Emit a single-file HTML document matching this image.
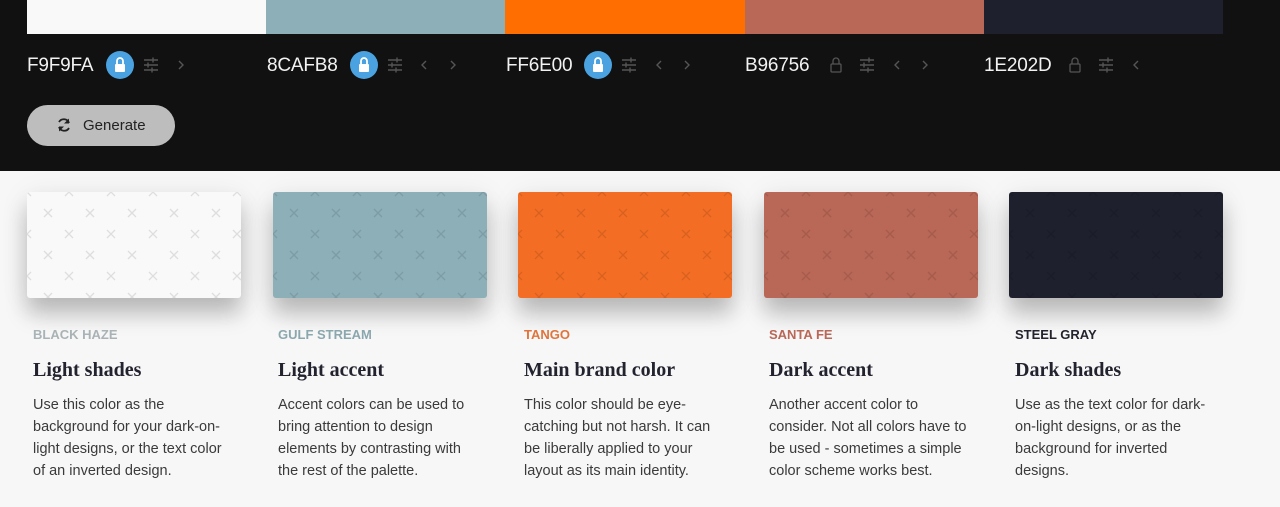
<!DOCTYPE html>
<html><head><meta charset="utf-8"><style>
*{margin:0;padding:0;box-sizing:border-box}
body{width:1280px;height:507px;overflow:hidden;background:#f7f7f7;font-family:"Liberation Sans",sans-serif;position:relative}
.top{position:absolute;left:0;top:0;width:1280px;height:171px;background:#111}
.bar{position:absolute;top:0;height:34px;width:239px}
.hex{position:absolute;top:55px;color:#f2f2f2;font-size:19px;letter-spacing:-0.2px}
.gen{position:absolute;left:27px;top:105px;width:148px;height:41px;border-radius:21px;background:#bdbdbd;color:#222;font-size:15px}
.gen span{position:absolute;left:56px;top:12px}
.card{position:absolute;top:192px;width:214px;height:106px;border-radius:3px;box-shadow:0 16px 22px rgba(0,0,0,.22),0 4px 30px rgba(0,0,0,.08);overflow:hidden}
.lab{position:absolute;top:327px;font-size:13px;font-weight:bold}
.tt{position:absolute;top:359px;font-family:"Liberation Serif",serif;font-weight:bold;font-size:20px;color:#22232e}
.ds{position:absolute;top:394px;width:200px;font-size:14.5px;line-height:22px;color:#3a3a3a;font-weight:300}
#px g{stroke:rgba(0,0,0,.11)}
</style></head><body>
<div class="top">
<div class="bar" style="left:27px;background:#f9f9fa"></div>
<div class="bar" style="left:266px;background:#8cafb8"></div>
<div class="bar" style="left:505px;background:#ff6e00;width:240px"></div>
<div class="bar" style="left:745px;background:#b96756"></div>
<div class="bar" style="left:984px;background:#1e202d"></div>

<div class="hex" style="left:27px">F9F9FA</div>
<div class="hex" style="left:267px">8CAFB8</div>
<div class="hex" style="left:506px">FF6E00</div>
<div class="hex" style="left:745px">B96756</div>
<div class="hex" style="left:984px">1E202D</div>
<svg width="1280" height="171" style="position:absolute;left:0;top:0">
<defs>
<g id="lk"><circle r="14" fill="#4aa3e0"/><rect x="-5" y="-1" width="10" height="8" rx="1" fill="#fff"/><path d="M-3 -1v-3a3 3 0 0 1 6 0v3" stroke="#fff" stroke-width="1.8" fill="none"/></g>
<g id="lo"><rect x="-5" y="-1" width="10" height="8" rx="1" fill="none" stroke="#555" stroke-width="1.3"/><path d="M-3 -1v-3a3 3 0 0 1 6 0v3" stroke="#555" stroke-width="1.3" fill="none"/></g>
<g id="sl" stroke="#555" stroke-width="1.4"><path d="M-7 -4h14M-7 1h14M-7 6h14"/><path d="M2 -6.5v5M-3 -1.5v5M1 3.5v5"/></g>
<path id="cr" d="M-2 -4l4 4l-4 4" stroke="#555" stroke-width="1.4" fill="none"/>
<path id="cl" d="M2 -4l-4 4l4 4" stroke="#555" stroke-width="1.4" fill="none"/>
</defs>
<use href="#lk" x="120" y="65"/><use href="#sl" x="151" y="64"/><use href="#cr" x="181" y="65"/>
<use href="#lk" x="364" y="65"/><use href="#sl" x="395" y="64"/><use href="#cl" x="424" y="65"/><use href="#cr" x="453" y="65"/>
<use href="#lk" x="598" y="65"/><use href="#sl" x="629" y="64"/><use href="#cl" x="659" y="65"/><use href="#cr" x="687" y="65"/>
<use href="#lo" x="836" y="65"/><use href="#sl" x="867" y="64"/><use href="#cl" x="897" y="65"/><use href="#cr" x="925" y="65"/>
<use href="#lo" x="1075" y="65"/><use href="#sl" x="1106" y="64"/><use href="#cl" x="1136" y="65"/>
</svg>
<div class="gen"><svg width="16" height="16" viewBox="0 0 16 16" style="position:absolute;left:29px;top:12px"><path d="M13 6A5.5 5.5 0 0 0 3 5M3 10a5.5 5.5 0 0 0 10 1" stroke="#222" stroke-width="1.8" fill="none"/><path d="M13 1.5v5h-5z M3 14.5v-5h5z" fill="#222"/></svg><span>Generate</span></div>
</div>

<svg width="0" height="0" style="position:absolute"><defs>
<pattern id="px" width="42" height="42" patternUnits="userSpaceOnUse" x="0" y="0"><g stroke-width="1.3" fill="none"><path d="M17 17l8 8M25 17l-8 8"/><path d="M-4 38l8 8M4 38l-8 8M38 38l8 8M46 38l-8 8M-4 -4l8 8M4 -4l-8 8M38 -4l8 8M46 -4l-8 8"/></g></pattern>
</defs></svg>

<div class="card" style="left:27px;background:#f9f9fa"><svg width="214" height="106"><rect width="214" height="106" fill="url(#px)"/></svg></div>
<div class="card" style="left:273px;background:#8cafb8"><svg width="214" height="106"><rect width="214" height="106" fill="url(#px)"/></svg></div>
<div class="card" style="left:518px;background:#f36d24"><svg width="214" height="106"><rect width="214" height="106" fill="url(#px)"/></svg></div>
<div class="card" style="left:764px;background:#b96756"><svg width="214" height="106"><rect width="214" height="106" fill="url(#px)"/></svg></div>
<div class="card" style="left:1009px;background:#1e202d"><svg width="214" height="106"><rect width="214" height="106" fill="url(#px)"/></svg></div>

<div class="lab" style="left:33px;color:#a9b3b6">BLACK HAZE</div>
<div class="lab" style="left:278px;color:#8ba7ae">GULF STREAM</div>
<div class="lab" style="left:524px;color:#e0743a">TANGO</div>
<div class="lab" style="left:769px;color:#b96756">SANTA FE</div>
<div class="lab" style="left:1015px;color:#22232e">STEEL GRAY</div>

<div class="tt" style="left:33px">Light shades</div>
<div class="tt" style="left:278px">Light accent</div>
<div class="tt" style="left:524px">Main brand color</div>
<div class="tt" style="left:769px">Dark accent</div>
<div class="tt" style="left:1015px">Dark shades</div>

<div class="ds" style="left:33px">Use this color as the<br>background for your dark-on-<br>light designs, or the text color<br>of an inverted design.</div>
<div class="ds" style="left:278px">Accent colors can be used to<br>bring attention to design<br>elements by contrasting with<br>the rest of the palette.</div>
<div class="ds" style="left:524px">This color should be eye-<br>catching but not harsh. It can<br>be liberally applied to your<br>layout as its main identity.</div>
<div class="ds" style="left:769px">Another accent color to<br>consider. Not all colors have to<br>be used - sometimes a simple<br>color scheme works best.</div>
<div class="ds" style="left:1015px">Use as the text color for dark-<br>on-light designs, or as the<br>background for inverted<br>designs.</div>
</body></html>
